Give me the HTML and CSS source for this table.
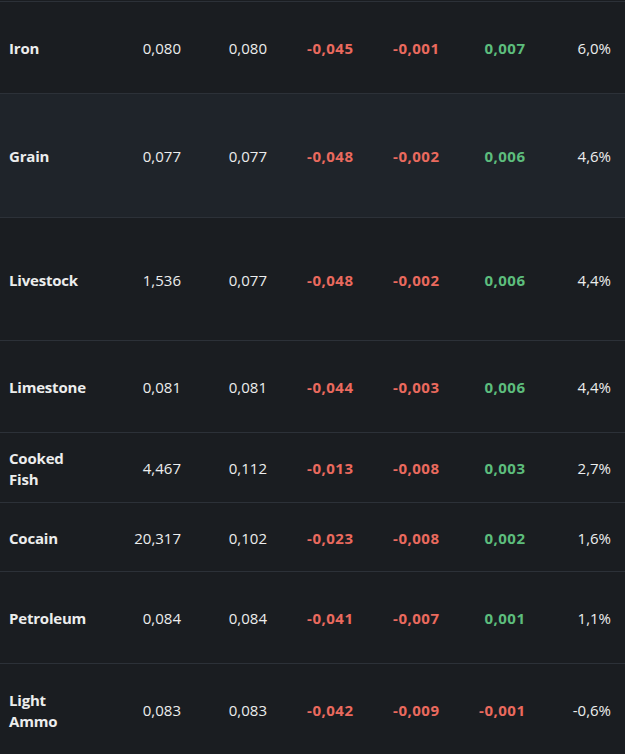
FILE: index.html
```html
<!DOCTYPE html>
<html lang="en">
<head>
<meta charset="utf-8">
<title>Goods</title>
<link rel="stylesheet" href="styles.css">
</head>
<body>
<div class="table">
  <div class="row h92">
    <div class="name">Iron</div>
    <div class="num">0,080</div><div class="num">0,080</div>
    <div class="num neg">-0,045</div><div class="num neg">-0,001</div>
    <div class="num pos">0,007</div><div class="num">6,0%</div>
  </div>
  <div class="row h124 hover">
    <div class="name">Grain</div>
    <div class="num">0,077</div><div class="num">0,077</div>
    <div class="num neg">-0,048</div><div class="num neg">-0,002</div>
    <div class="num pos">0,006</div><div class="num">4,6%</div>
  </div>
  <div class="row h123">
    <div class="name">Livestock</div>
    <div class="num">1,536</div><div class="num">0,077</div>
    <div class="num neg">-0,048</div><div class="num neg">-0,002</div>
    <div class="num pos">0,006</div><div class="num">4,4%</div>
  </div>
  <div class="row h92">
    <div class="name">Limestone</div>
    <div class="num">0,081</div><div class="num">0,081</div>
    <div class="num neg">-0,044</div><div class="num neg">-0,003</div>
    <div class="num pos">0,006</div><div class="num">4,4%</div>
  </div>
  <div class="row h70">
    <div class="name">Cooked Fish</div>
    <div class="num">4,467</div><div class="num">0,112</div>
    <div class="num neg">-0,013</div><div class="num neg">-0,008</div>
    <div class="num pos">0,003</div><div class="num">2,7%</div>
  </div>
  <div class="row h69">
    <div class="name">Cocain</div>
    <div class="num">20,317</div><div class="num">0,102</div>
    <div class="num neg">-0,023</div><div class="num neg">-0,008</div>
    <div class="num pos">0,002</div><div class="num">1,6%</div>
  </div>
  <div class="row h92">
    <div class="name">Petroleum</div>
    <div class="num">0,084</div><div class="num">0,084</div>
    <div class="num neg">-0,041</div><div class="num neg">-0,007</div>
    <div class="num pos">0,001</div><div class="num">1,1%</div>
  </div>
  <div class="row h92">
    <div class="name">Light Ammo</div>
    <div class="num">0,083</div><div class="num">0,083</div>
    <div class="num neg">-0,042</div><div class="num neg">-0,009</div>
    <div class="num neg">-0,001</div><div class="num">-0,6%</div>
  </div>
</div>
</body>
</html>
```
FILE: styles.css
```css
html, body {
  margin: 0;
  padding: 0;
  background: #1a1d21;
}
body {
  font-family: "Open Sans", "Noto Sans", "Liberation Sans", sans-serif;
  font-size: 15px;
  color: #eceded;
  overflow: hidden;
}
.table {
  width: 625px;
  border-top: 1px solid #2c3138;
  margin-top: 1px;
}
.row {
  display: grid;
  grid-template-columns: 103px repeat(6, 86px);
  align-items: center;
  padding-top: 2px;
  border-bottom: 1px solid #2c3138;
  box-sizing: border-box;
}
.row.hover {
  background: #1f242a;
}
.h92 { height: 92px; }
.h124 { height: 124px; }
.h123 { height: 123px; }
.h70 { height: 70px; }
.h69 { height: 69px; }
.name {
  font-weight: 700;
  padding: 0 8px 0 9px;
  line-height: 21px;
  letter-spacing: -0.2px;
}
.num {
  text-align: right;
  padding-right: 8px;
  line-height: 21px;
}
.neg,
.pos {
  font-weight: 700;
  letter-spacing: 0.5px;
  padding-right: 7.5px;
}
.neg {
  color: #ea6a5e;
}
.pos {
  color: #5dbd7d;
}
```
